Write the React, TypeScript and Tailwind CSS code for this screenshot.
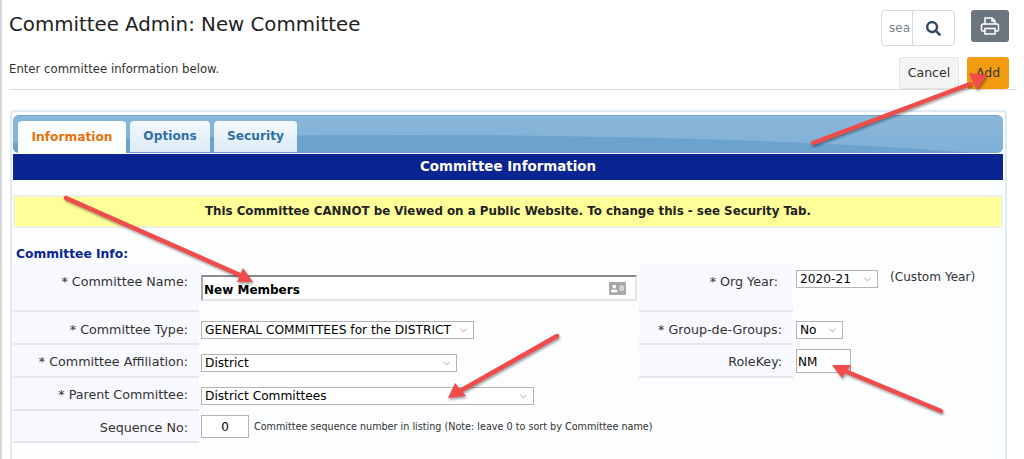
import React from 'react';
import { FaSearch, FaAddressCard } from 'react-icons/fa';
import { ChevronDown } from 'lucide-react';

const Select = ({ value, className }: { value: string; className: string }) => (
  <div className={`relative h-[18px] ${className}`}>
    <select
      defaultValue={value}
      className="block w-full h-full appearance-none bg-white border border-[#b4b4b4] pl-[3px] pr-[20px] text-[12.200px] leading-[16px] text-black outline-none"
    >
      <option>{value}</option>
    </select>
    <ChevronDown size={11} strokeWidth={1.5} className="absolute right-[5px] top-[4px] text-[#777] pointer-events-none" />
  </div>
);

const Label = ({ children, className }: { children: React.ReactNode; className: string }) => (
  <div className={`shrink-0 bg-[#f8f8ff] border-b-2 border-[#e4e6ea] text-right text-[12.700px] leading-[16px] text-[#333] ${className}`}>
    {children}
  </div>
);

const Arrow = ({ x1, y1, x2, y2, a, b }: { x1: number; y1: number; x2: number; y2: number; a: string; b: string }) => (
  <g>
    <line x1={x1} y1={y1} x2={x2} y2={y2} stroke="#f14b4b" strokeWidth="4.5" strokeLinecap="round" />
    <polygon points={`${a} ${b}`} fill="#f14b4b" />
  </g>
);

const App: React.FC = () => {
  return (
    <div className="relative w-[1024px] h-[459px] overflow-hidden bg-white border-l-2 border-[#d8d8d8] font-['DejaVu_Sans',Verdana,sans-serif]">
      <div className="ml-[7px] mr-[7px] h-[90px] border-b border-[#dcdcdc] flex justify-between">
        <div>
          <h1 className="pt-[12px] text-[19.800px] leading-[26px] text-[#222]">Committee Admin: New Committee</h1>
          <p className="mt-[23px] text-[11.700px] leading-[16px] text-[#333]">Enter committee information below.</p>
        </div>
        <div className="flex flex-col items-end pr-[8px] pt-[10px] w-[140px]">
          <div className="flex items-start gap-[16px]">
            <div className="flex w-[74px] h-[36px] border border-[#d5dae0] rounded-[4px] bg-white">
              <div className="w-[31px] border-r border-[#d5dae0] pl-[7px] text-[12px] leading-[34px] text-[#7a828a]">sea</div>
              <div className="flex-1 flex items-center justify-center text-[#34495e]">
                <FaSearch size={15} />
              </div>
            </div>
            <button className="w-[38px] h-[32px] bg-[#6c757d] rounded-[3px] flex items-center justify-center">
              <svg width="20" height="20" viewBox="0 0 20 20" fill="none" stroke="#fff" strokeWidth="1.5">
                <path d="M5 8V2h7l3 3v3" />
                <path d="M5 15H2.500a1 1 0 0 1-1-1V9.500a1.500 1.500 0 0 1 1.500-1.500h14a1.500 1.500 0 0 1 1.500 1.500V14a1 1 0 0 1-1 1H15" />
                <path d="M5 12.500h10V18H5z" />
                <path d="M12 2v3h3" />
              </svg>
            </button>
          </div>
          <div className="mt-[11px] flex gap-[8px]">
            <button className="w-[60px] h-[32px] bg-[#f4f4f4] border border-[#e2e2e2] rounded-[3px] text-[12.500px] text-[#333]">Cancel</button>
            <button className="w-[42px] h-[32px] bg-[#f39c12] rounded-[3px] text-[12.500px] text-[#333]">Add</button>
          </div>
        </div>
      </div>

      <div className="mt-[20px] ml-[8px] w-[997px] h-[360px] bg-[#fbfdfe] border-2 border-[#dfeaf5] rounded-t-[4px] pl-[1px] pr-[2px] pt-[3px]">
        <div className="relative h-[38px] bg-gradient-to-b from-[#8ab7da] to-[#7fb0d6] rounded-[6px] border-t border-[#6fa6d3] flex gap-[4px] pl-[5px] pt-[5px] overflow-hidden">
          <div className="absolute left-[-40%] right-[-20%] top-[19px] h-[120px] bg-[#6ca2ce] rounded-[50%]" />
          <div className="relative w-[108px] h-[32px] bg-[#fbfdfe] rounded-t-[4px] text-center text-[12.200px] leading-[32px] font-bold text-[#e8710a]">Information</div>
          <div className="relative w-[80px] h-[31px] bg-gradient-to-b from-[#f3f8fc] to-[#dcebf7] rounded-t-[4px] text-center text-[12.200px] leading-[31px] font-bold text-[#2f6ea5]">Options</div>
          <div className="relative w-[83px] h-[31px] bg-gradient-to-b from-[#f3f8fc] to-[#dcebf7] rounded-t-[4px] text-center text-[12.200px] leading-[31px] font-bold text-[#2f6ea5]">Security</div>
        </div>
        <div className="mt-px h-[26px] bg-[#0a2491] text-center text-[13.400px] leading-[26px] font-bold text-white">Committee Information</div>
        <div className="mt-[15px] h-[33px] bg-[#ffff99] border-2 border-[#eef0e4] text-center text-[11.850px] leading-[29px] font-bold text-[#222]">
          This Committee CANNOT be Viewed on a Public Website. To change this - see Security Tab.
        </div>
        <div className="mt-[19px] pl-[3px] h-[17px] text-[12.300px] leading-[14px] font-bold text-[#0a2491]">Committee Info:</div>

        <div className="flex">
          <div className="w-[626px]">
            <div className="flex h-[48px]">
              <Label className="w-[186px] pr-[11px] pt-[10px]">* Committee Name:</Label>
              <div className="relative ml-[2px] mt-[11px] w-[436px] h-[26px] bg-white border-2 border-[#e4e4e4] border-t-[#8a8a8a] border-l-[#a8a8a8] pl-[1px] pt-[3px] text-[12px] leading-[20px] font-bold text-black">
                New Members
                <FaAddressCard size={17} className="absolute right-[9px] top-[3px] text-[#a8a8a8]" />
              </div>
            </div>
            <div className="flex h-[33px]">
              <Label className="w-[186px] pr-[11px] pt-[10px]">* Committee Type:</Label>
              <Select value="GENERAL COMMITTEES for the DISTRICT" className="ml-[2px] mt-[9px] w-[273px]" />
            </div>
            <div className="flex h-[33px]">
              <Label className="w-[186px] pr-[11px] pt-[9px]">* Committee Affiliation:</Label>
              <Select value="District" className="ml-[2px] mt-[9px] w-[256px]" />
            </div>
            <div className="flex h-[33px]">
              <Label className="w-[186px] pr-[11px] pt-[9px]">* Parent Committee:</Label>
              <Select value="District Committees" className="ml-[2px] mt-[9px] w-[333px]" />
            </div>
            <div className="flex h-[32px]">
              <Label className="w-[186px] pr-[11px] pt-[9px]">Sequence No:</Label>
              <div className="shrink-0 ml-[2px] mt-[4px] w-[48px] h-[23px] bg-white border border-[#b4b4b4] text-center text-[12px] leading-[23px] text-black">0</div>
              <span className="ml-[5px] mt-[9px] whitespace-nowrap text-[9.650px] leading-[14px] text-[#333]">Committee sequence number in listing (Note: leave 0 to sort by Committee name)</span>
            </div>
          </div>
          <div className="flex-1">
            <div className="flex h-[48px]">
              <Label className="w-[154px] pr-[15px] pt-[10px]">* Org Year:</Label>
              <Select value="2020-21" className="ml-[3px] mt-[6px] w-[82px]" />
              <span className="ml-[12px] mt-[5px] text-[12.100px] leading-[16px] text-[#333]">(Custom Year)</span>
            </div>
            <div className="flex h-[33px]">
              <Label className="w-[154px] pr-[11px] pt-[10px]">* Group-de-Groups:</Label>
              <Select value="No" className="ml-[3px] mt-[9px] w-[47px]" />
            </div>
            <div className="flex h-[33px]">
              <Label className="w-[154px] pr-[11px] pt-[9px]">RoleKey:</Label>
              <div className="ml-[3px] mt-[4px] w-[55px] h-[24px] bg-white border border-[#b4b4b4] pl-[1px] text-[12px] leading-[25px] text-black">NM</div>
            </div>
          </div>
        </div>
      </div>

      {/* annotation arrows on top of the form */}
      <svg className="absolute left-0 top-0 pointer-events-none drop-shadow-[1px_2px_1px_rgba(0,0,0,0.35)]" width="1024" height="459">
        <Arrow x1={811} y1={143} x2={968} y2={84} a="985,75 975,90" b="967,73" />
        <Arrow x1={64} y1={198} x2={238} y2={275} a="251,282 235,282" b="241,268" />
        <Arrow x1={555} y1={336} x2={458} y2={391} a="446,398 453,383" b="464,396" />
        <Arrow x1={939} y1={411} x2={843} y2={371} a="830,365 849,365" b="840,378" />
      </svg>
    </div>
  );
};

export default App;
